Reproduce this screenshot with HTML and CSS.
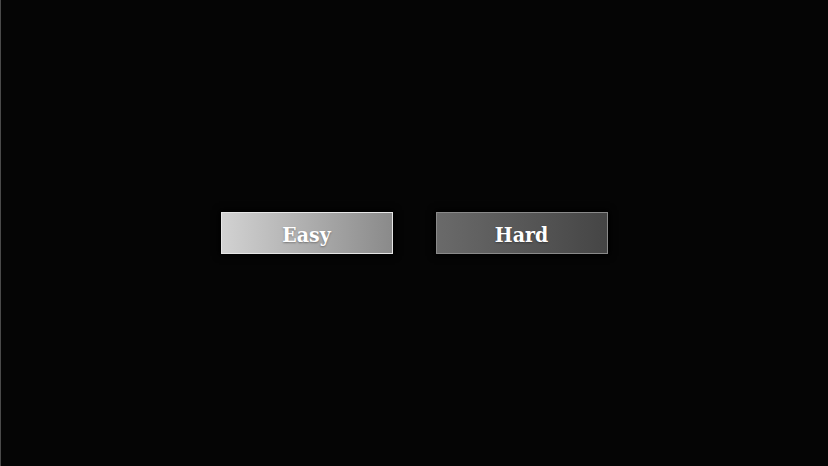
FILE: index.html
```html
<!DOCTYPE html>
<html>
<head>
<meta charset="utf-8">
<link rel="stylesheet" href="styles.css">
</head>
<body>
<div class="stage">
  <div class="choices">
    <button class="choice easy">Easy</button>
    <button class="choice hard">Hard</button>
  </div>
</div>
</body>
</html>
```
FILE: styles.css
```css
html, body {
  margin: 0;
  padding: 0;
  height: 100%;
  background: #050505;
}
.stage {
  height: 100%;
  box-sizing: border-box;
  border-left: 1px solid #4a4a4a;
  display: flex;
  align-items: center;
  justify-content: center;
}
.choices {
  display: flex;
  gap: 43px;
  margin-left: -1px;
}
.choice {
  width: 172px;
  height: 42px;
  box-sizing: border-box;
  font-family: "DejaVu Serif", serif;
  font-stretch: condensed;
  font-weight: bold;
  font-size: 21px;
  color: #ffffff;
  text-shadow: 0 1px 2px rgba(0,0,0,0.35);
  padding: 3px 0 0 0;
  cursor: pointer;
  box-shadow: 0 0 6px 2px #000;
}
.easy {
  background: linear-gradient(to right, #d2d2d2, #8a8a8a);
  border: 1.5px solid #e6e6e6;
}
.hard {
  background: linear-gradient(to right, #6a6a6a, #454545);
  border: 1.5px solid #8a8a8a;
}
```
